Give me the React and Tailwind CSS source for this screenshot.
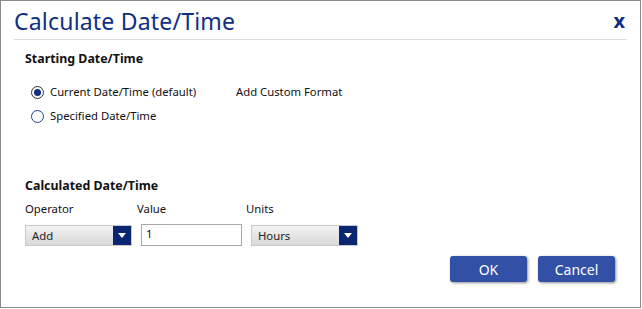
export default function App() {
  const font = { fontFamily: '"Noto Sans", "Open Sans", sans-serif' };
  return (
    <div className="w-[642px] h-[309px] bg-white" style={font}>
      <div className="w-[641px] h-[308px] border border-[#8a8a8a] flex flex-col">
        <div className="flex items-center justify-between pl-[13px] pr-[15px] h-[38px] pt-[2px]">
          <div className="text-[23px] text-[#0f2f84] leading-none tracking-[0.2px]">Calculate Date/Time</div>
          <div className="text-[20px] font-bold text-[#0f2f84] leading-none">x</div>
        </div>
        <div className="mx-[13px] h-px bg-[#dedede]" />
        <div className="pl-[24px] pt-[11px] text-[11.3px] text-[#111]">
          <div className="font-bold text-[12.4px] h-[16px] leading-[16px]">Starting Date/Time</div>
          <div className="mt-[17px] flex items-center h-[16px]">
            <span className="w-[13px] h-[13px] rounded-full border border-[#333] flex items-center justify-center ml-[6px]">
              <span className="w-[7px] h-[7px] rounded-full bg-[#0f2f84]" />
            </span>
            <span className="ml-[6px] w-[186px]">Current Date/Time (default)</span>
            <span>Add Custom Format</span>
          </div>
          <div className="mt-[8px] flex items-center h-[16px]">
            <span className="w-[13px] h-[13px] rounded-full border border-[#1f3f8f] ml-[6px]" />
            <span className="ml-[6px]">Specified Date/Time</span>
          </div>
          <div className="mt-[54px] font-bold text-[12.4px] h-[16px] leading-[16px]">Calculated Date/Time</div>
          <div className="mt-[7px] flex h-[16px] leading-[16px]">
            <span className="w-[112px]">Operator</span>
            <span className="w-[109px]">Value</span>
            <span>Units</span>
          </div>
          <div className="mt-[7px] flex items-center">
            <div className="w-[107px] h-[21px] border border-[#c8c8c8] bg-gradient-to-b from-[#f2f2f2] to-[#d9d9d9] flex items-stretch">
              <span className="flex-1 pl-[6px] leading-[19px] text-[#222]">Add</span>
              <span className="w-[18px] bg-[#0a2672] flex items-center justify-center">
                <svg width="8" height="5" viewBox="0 0 8 5"><path d="M0 0h8L4 5z" fill="#fff" /></svg>
              </span>
            </div>
            <div className="ml-[9px] w-[101px] h-[22px] border border-[#a8a8a8] bg-white pl-[4px] leading-[18px]">1</div>
            <div className="ml-[9px] w-[107px] h-[21px] border border-[#c8c8c8] bg-gradient-to-b from-[#f2f2f2] to-[#d9d9d9] flex items-stretch">
              <span className="flex-1 pl-[6px] leading-[19px] text-[#222]">Hours</span>
              <span className="w-[18px] bg-[#0a2672] flex items-center justify-center">
                <svg width="8" height="5" viewBox="0 0 8 5"><path d="M0 0h8L4 5z" fill="#fff" /></svg>
              </span>
            </div>
          </div>
        </div>
        <div className="flex justify-end gap-[11px] pr-[25px] mt-[10px]">
          <button className="w-[77px] h-[26px] rounded-[3px] bg-[#3250a6] text-white text-[14px] shadow-[1px_1px_3px_rgba(0,0,0,0.45)]">OK</button>
          <button className="w-[77px] h-[26px] rounded-[3px] bg-[#3250a6] text-white text-[14px] shadow-[1px_1px_3px_rgba(0,0,0,0.45)]">Cancel</button>
        </div>
      </div>
    </div>
  );
}
